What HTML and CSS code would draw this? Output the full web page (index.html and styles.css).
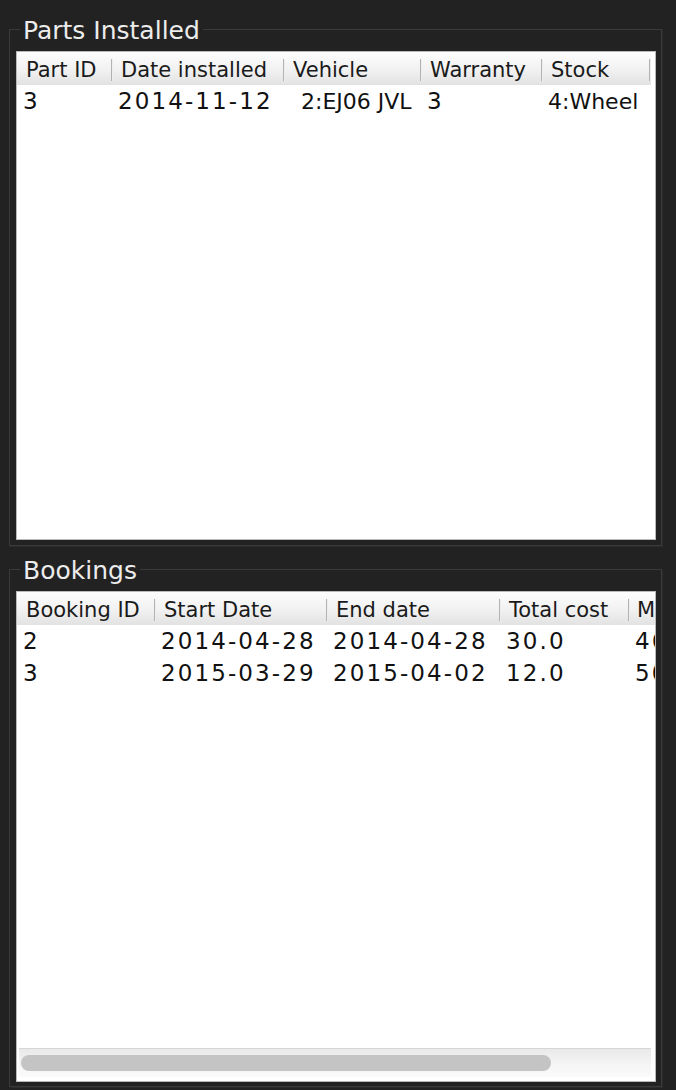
FILE: index.html
```html
<!DOCTYPE html>
<html lang="en">
<head>
<meta charset="utf-8">
<title>Vehicle details</title>
<link rel="stylesheet" href="styles.css">
</head>
<body>
<div class="window">
  <fieldset class="group group--parts">
    <legend class="group__title">Parts Installed</legend>
    <div class="pane pane--parts">
      <div class="pane__viewport">
        <table class="grid grid--parts">
          <colgroup>
            <col class="w96"><col class="w172"><col class="w137"><col class="w121"><col class="w108">
          </colgroup>
          <thead>
            <tr><th>Part ID</th><th>Date installed</th><th>Vehicle</th><th>Warranty</th><th>Stock</th></tr>
          </thead>
          <tbody>
            <tr><td class="num">3</td><td class="num">2014-11-12</td><td class="cell--indent">2:EJ06 JVL</td><td class="num">3</td><td>4:Wheel</td></tr>
          </tbody>
        </table>
      </div>
    </div>
  </fieldset>

  <fieldset class="group group--bookings">
    <legend class="group__title">Bookings</legend>
    <div class="pane pane--bookings">
      <div class="pane__viewport">
        <table class="grid grid--bookings">
          <colgroup>
            <col class="w139"><col class="w172"><col class="w173"><col class="w129"><col class="w142">
          </colgroup>
          <thead>
            <tr><th>Booking ID</th><th>Start Date</th><th>End date</th><th>Total cost</th><th class="th--tight">Mileage</th></tr>
          </thead>
          <tbody>
            <tr><td class="num">2</td><td class="num">2014-04-28</td><td class="num">2014-04-28</td><td class="num">30.0</td><td class="num">46</td></tr>
            <tr><td class="num">3</td><td class="num">2015-03-29</td><td class="num">2015-04-02</td><td class="num">12.0</td><td class="num">50</td></tr>
          </tbody>
        </table>
      </div>
      <div class="hscroll"><div class="hscroll__thumb"></div></div>
    </div>
  </fieldset>
</div>
</body>
</html>
```

FILE: styles.css
```css
html, body {
  margin: 0;
  padding: 0;
  background: #222222;
}

body {
  font-family: "DejaVu Sans", "Liberation Sans", sans-serif;
  width: 676px;
  height: 1090px;
  overflow: hidden;
}

.window {
  padding-top: 15px;
}

.group {
  margin: 0 14px 0 9px;
  padding: 8px 5px 5px 6px;
  border: 1px solid #3a3a3a;
  box-shadow: 1px 1px 0 #2b2b2b;
  min-width: 0;
}

.group--bookings {
  margin-top: 9px;
  padding-bottom: 4px;
}

.group__title {
  margin-left: 4px;
  padding: 4px 3px 0;
  font-size: 25px;
  line-height: 24px;
  color: #ececec;
}

.pane {
  box-sizing: border-box;
  background: #ffffff;
  border: 1px solid #b9b9b9;
  display: flex;
  flex-direction: column;
}

.pane--parts {
  height: 489px;
}

.pane--bookings {
  height: 491px;
}

.pane__viewport {
  flex: 1;
  min-height: 0;
  overflow: hidden;
}

.grid {
  table-layout: fixed;
  border-collapse: collapse;
  border-spacing: 0;
  color: #111111;
}

.grid--parts { width: 634px; }
.grid--bookings { width: 755px; }

.w96 { width: 96px; }
.w108 { width: 108px; }
.w121 { width: 121px; }
.w129 { width: 129px; }
.w137 { width: 137px; }
.w139 { width: 139px; }
.w142 { width: 142px; }
.w172 { width: 172px; }
.w173 { width: 173px; }

.grid th {
  position: relative;
  height: 30px;
  padding: 3px 0 0 8px;
  text-align: left;
  font-weight: normal;
  font-size: 21px;
  color: #1a1a1a;
  white-space: nowrap;
  overflow: hidden;
  background: linear-gradient(#fdfdfd, #f1f1f1 55%, #e2e2e2);
}

.grid th:first-child {
  padding-left: 9px;
}

.grid th.th--tight {
  padding-left: 7px;
}

.grid th::after {
  content: "";
  position: absolute;
  right: 0;
  top: 7px;
  bottom: 4px;
  width: 2px;
  background: linear-gradient(90deg, #b2b2b2 50%, #eeeeee 50%);
}

.grid td {
  height: 32px;
  padding: 0 0 0 5px;
  font-size: 22px;
  white-space: nowrap;
  overflow: hidden;
}

.grid td.num {
  font-size: 23px;
  letter-spacing: 2.1px;
}

.grid td:first-child {
  padding-left: 6px;
}

.grid td.cell--indent {
  padding-left: 16px;
}

.hscroll {
  flex: none;
  height: 28px;
  margin: 0 4px 4px 2px;
  border-top: 1px solid #d6d6d6;
  background: linear-gradient(#e9e9e9, #f6f6f6 60%, #fafafa);
  display: flex;
  align-items: flex-start;
}

.hscroll__thumb {
  width: 530px;
  height: 16px;
  margin: 6px 0 0 2px;
  border-radius: 8px;
  background: #c4c4c4;
}
```
